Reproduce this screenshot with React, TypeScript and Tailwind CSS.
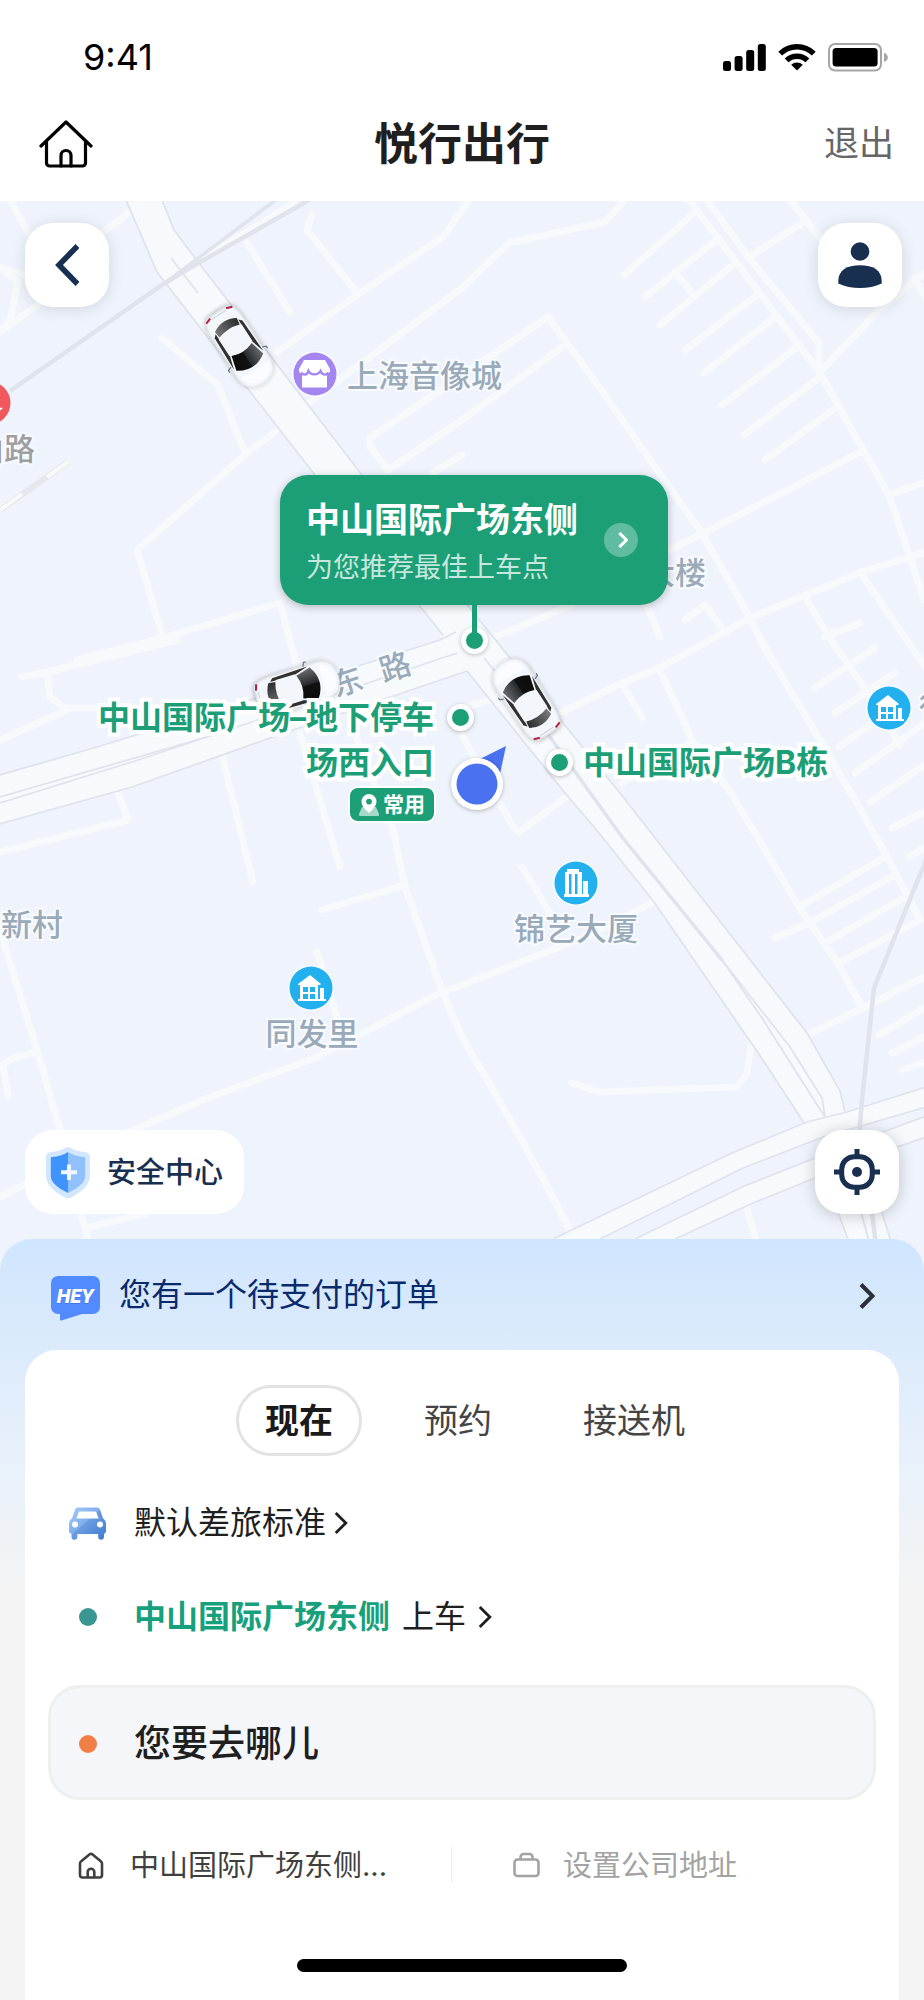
import { useState } from 'react'
import type { SVGProps } from 'react'

type IconProps = SVGProps<SVGSVGElement>

function IconSignal(p: IconProps) {
  return (
    <svg viewBox="0 0 43 27" fill="currentColor" aria-hidden {...p}>
      <rect x="0" y="17" width="8" height="10" rx="2.5" />
      <rect x="11.6" y="12" width="8" height="15" rx="2.5" />
      <rect x="23.2" y="6" width="8" height="21" rx="2.5" />
      <rect x="34.8" y="0" width="8" height="27" rx="2.5" />
    </svg>
  )
}

function IconWifi(p: IconProps) {
  return (
    <svg viewBox="0 0 38 28" fill="none" stroke="currentColor" strokeWidth={5.4} aria-hidden {...p}>
      <path d="M2.2 10.6a24 24 0 0133.6 0" />
      <path d="M8.6 17.4a15 15 0 0120.8 0" />
      <path d="M13.2 21.8a8.4 8.4 0 0111.6 0L19 27.6z" fill="currentColor" stroke="none" />
    </svg>
  )
}

function IconBattery(p: IconProps) {
  return (
    <svg viewBox="0 0 60 29" fill="none" aria-hidden {...p}>
      <rect x="1" y="1" width="52" height="26.500" rx="6" stroke="#a6a6a6" strokeWidth={2} />
      <rect x="4.600" y="5" width="45" height="18.500" rx="3.500" fill="#000" />
      <path d="M56 9.800c2.400 1 3.800 2.700 3.800 4.600s-1.400 3.700-3.800 4.600z" fill="#a6a6a6" />
    </svg>
  )
}

function IconHome(p: IconProps) {
  return (
    <svg viewBox="0 0 54 48" fill="none" stroke="currentColor" strokeWidth={3.2} strokeLinecap="round" strokeLinejoin="round" aria-hidden {...p}>
      <path d="M2 26L27 2l25 24" />
      <path d="M7.500 21.500V43a3 3 0 003 3h33a3 3 0 003-3V21.500" />
      <path d="M22 46V35.500a5 5 0 0110 0V46" />
    </svg>
  )
}

function IconBack(p: IconProps) {
  return (
    <svg viewBox="0 0 24 42" fill="none" stroke="currentColor" strokeWidth={5.6} aria-hidden {...p}>
      <path d="M22.500 2L4 21l18.500 19" />
    </svg>
  )
}

function IconUser(p: IconProps) {
  return (
    <svg viewBox="0 0 44 47" fill="currentColor" aria-hidden {...p}>
      <circle cx="22" cy="9.500" r="9.300" />
      <path d="M.3 41.500V39C.3 28 9 23.200 22 23.200S43.700 28 43.700 39v2.500C37 44.800 30 46 22 46S7 44.800.3 41.500z" />
    </svg>
  )
}

function IconTarget(p: IconProps) {
  return (
    <svg viewBox="0 0 46 46" fill="none" stroke="currentColor" strokeWidth={5} aria-hidden {...p}>
      <rect x="7.700" y="7.700" width="30.600" height="30.600" rx="12.500" />
      <path d="M23 0v7M23 39v7M0 23h7M39 23h7" />
      <circle cx="23" cy="23" r="5" fill="currentColor" stroke="none" />
    </svg>
  )
}

function IconShield(p: IconProps) {
  return (
    <svg viewBox="0 0 44 51" fill="none" aria-hidden {...p}>
      <path d="M22 0c2 0 5.500 3 10.500 4 3 .6 6 .8 8 1.500C43 6.400 44 7.800 44 10v19c0 8.500-8 15.500-18.500 21.200-2.500 1.200-4.500 1.200-7 0C8 44.500 0 37.500 0 29V10c0-2.200 1-3.600 3.500-4.500 2-.7 5-.9 8-1.500C16.500 3 20 0 22 0z" fill="#d3e6ff" />
      <path d="M22 5c-4.500 2.800-10 4.600-16 5-.8 0-1.200.4-1.200 1.200V29C4.800 35.500 12 41 22 46z" fill="#3e94fb" />
      <path d="M22 5c4.500 2.800 10 4.600 16 5 .8 0 1.200.4 1.200 1.200V29C39.200 35.500 32 41 22 46z" fill="#91c0ff" />
      <path d="M23 17.500V33M15 25.200h16" stroke="#f4f6ff" strokeWidth={4} />
    </svg>
  )
}

function IconHey(p: IconProps) {
  return (
    <svg viewBox="0 0 49 45" aria-hidden {...p}>
      <path d="M7 0h35a7 7 0 017 7v24a7 7 0 01-7 7H31L10.500 44.500c-1 .3-1.500-.2-1.500-1V38H7a7 7 0 01-7-7V7a7 7 0 017-7z" fill="#528bff" />
      <g fontSize="20" fontWeight={900} fontStyle="italic" fontFamily="Roboto, sans-serif" textAnchor="middle">
        <text x="24" y="28" fill="#2f63d8" opacity={0.5}>HEY</text>
        <text x="24" y="27" fill="#fff">HEY</text>
      </g>
    </svg>
  )
}

function IconCarFront(p: IconProps) {
  return (
    <svg viewBox="0 0 37 33" aria-hidden {...p}>
      <defs>
        <linearGradient id="car-front" x1="0" y1="0" x2="1" y2="1">
          <stop offset="0" stopColor="#a9ccf7" />
          <stop offset=".45" stopColor="#7fadec" />
          <stop offset=".46" stopColor="#6b9de0" />
          <stop offset="1" stopColor="#3d7ad0" />
        </linearGradient>
      </defs>
      <path fillRule="evenodd" d="M9 .5h19c1.500 0 2.600.8 3.100 2.200l3 8.800c1.900 1.200 2.900 3 2.900 5.500v7c0 1.500-.7 2.500-2 2.700v3.100a2.900 2.900 0 01-5.800 0V27H8.300v2.800a2.900 2.900 0 01-5.800 0v-3C.8 26.500 0 25.500 0 24v-7c0-2.500 1.100-4.300 3-5.500l3-8.800C6.500 1.300 7.500.5 9 .5zm1 4L7.300 11.400h22.400L27.300 5.200c-.2-.5-.6-.7-1-.7zM6 14.500a3 3 0 100 6 3 3 0 000-6zm25 0a3 3 0 100 6 3 3 0 000-6z" fill="url(#car-front)" />
    </svg>
  )
}

function IconHomeSmall(p: IconProps) {
  return (
    <svg viewBox="0 0 26 27" fill="none" stroke="currentColor" strokeWidth={2.600} strokeLinejoin="round" aria-hidden {...p}>
      <path d="M2 11.500c0-1 .4-1.700 1.200-2.300L11.400 2.400c1-.8 2.200-.8 3.200 0l8.200 6.800c.8.600 1.200 1.300 1.200 2.300V23a2.500 2.500 0 01-2.500 2.500h-17A2.500 2.500 0 012 23z" />
      <path d="M9.700 25.500V20a3.300 3.300 0 016.600 0v5.500" />
    </svg>
  )
}

function IconBag(p: IconProps) {
  return (
    <svg viewBox="0 0 27 26" fill="none" stroke="currentColor" strokeWidth={2.600} aria-hidden {...p}>
      <rect x="1.500" y="7.500" width="24" height="16.500" rx="3" />
      <path d="M7.500 7.500V5a3 3 0 013-3h6a3 3 0 013 3v2.500" />
    </svg>
  )
}

function IconChevron(p: IconProps) {
  return (
    <svg viewBox="0 0 16 26" fill="none" stroke="currentColor" strokeWidth={3.200} aria-hidden {...p}>
      <path d="M2 1.500L13.500 13 2 24.500" />
    </svg>
  )
}

function IconPlace(p: IconProps) {
  return (
    <svg viewBox="0 0 20 22" fill="none" aria-hidden {...p}>
      <path d="M3 13h14l3 7a1.500 1.500 0 01-1.500 2h-17A1.500 1.500 0 010 20z" fill="#a5d9c8" />
      <path fillRule="evenodd" d="M10 0a7.500 7.500 0 017.500 7.500C17.500 12 14 15 10 19 6 15 2.500 12 2.500 7.500A7.500 7.500 0 0110 0zm0 4.700a2.900 2.900 0 100 5.800 2.900 2.900 0 000-5.800z" fill="#fff" />
    </svg>
  )
}

const minorRoads = [
  '10,200 28,233', '98,236 130,212', '0,267 18,282 10,322 0,330', '0,268 30,276', '0,332 40,303',
  '247,243 290,312', '312,215 307,230 357,293', '277,352 357,295 443,237 470,199',
  '162,338 218,385 245,453', '275,432 248,452 137,550 163,638', '77,660 163,638 280,603 297,667',
  '310,402 462,288 509,243 605,222 625,200', '388,470 370,447 370,438 548,317 600,388 662,477 702,533 750,618 772,660',
  '388,470 462,420 565,345', '433,473 462,455',
  '689,200 820,373 839,407 865,453 889,495 910,557 924,600', '707,200 749,258 819,343 819,370',
  '692,215 624,275', '719,238 645,297', '675,272 692,293', '735,263 660,325', '757,295 685,350',
  '775,317 704,373', '797,347 722,405', '820,377 744,435', '837,407 765,460', '860,452 782,493 670,550',
  '790,200 820,238', '749,257 804,222', '820,372 879,310 926,272', '914,278 926,297', '889,495 926,482',
  '926,552 862,572 750,618 659,668 622,683 562,712', '860,572 926,668', '807,600 829,637 864,687 900,745',
  '824,637 860,623', '705,605 685,620', '705,605 725,633', '495,637 572,605', '647,607 660,637',
  '875,648 815,688', '895,673 835,713', '905,700 839,747', '926,722 855,773', '926,764 870,802',
  '926,811 892,828', '926,847 909,857', '622,683 642,718', '622,783 692,742',
  '659,668 692,740 729,790 799,907 839,965 862,1007', '799,907 885,857', '775,938 809,923 895,875',
  '825,943 905,897', '839,963 920,920', '760,640 828,753 885,853 920,920', '807,1035 865,1007 926,976',
  '879,1035 926,1007', '892,1053 926,1036', '902,1070 926,1062',
  '572,1083 599,1092 737,1087 747,1073 752,1040', '522,867 550,913', '203,1100 317,1057 440,993 462,985 585,937 652,903',
  '405,887 443,993 462,1037 499,1100 540,1173 572,1234', '462,708 490,700', '462,735 512,825 519,832 565,798',
  '747,1208 756,1242', '22,677 47,672 177,640', '47,672 50,697 67,710 0,740', '67,708 100,708',
  '117,790 128,820 0,852', '222,755 253,882', '300,733 340,867', '357,740 393,830 405,887', '322,910 405,885',
  '317,952 337,1017', '203,1100 127,1133 0,1197', '90,1227 147,1213', '0,930 37,1050 60,1130 88,1240',
  '37,1052 13,1058 3,1065 8,1095',
]

// Filled bands of the avenues, drawn over the side streets
const avenues = [
  '0,775 97,747 260,697 440,640 480,624 500,664 462,672 287,732 132,787 0,824',
  '126,200 157,272 315,475 443,635 467,671 565,793 595,828 654,902 763,1060 804,1123 845,1112 840,1091 807,1033 620,793 510,658 362,475 202,267 174,230 162,200',
  '553,1239 732,1153 807,1122 847,1112 926,1087 926,1108 823,1137 743,1168 600,1239',
  '635,1239 742,1187 815,1158 883,1132 926,1116 926,1137 897,1147 815,1178 753,1203 675,1239',
  '826,1180 848,1245 892,1245 872,1180',
]

const avenueEdges = [
  '126,200 157,272 315,475 443,635', '162,200 174,230 202,267 362,475 510,658 620,793 807,1033 840,1091 845,1112',
  '467,671 565,793 595,828 654,902 763,1060 804,1123', '171,258 198,293',
  '0,775 97,747 260,697 440,640 456,632', '0,824 132,787 287,732 467,671', '0,797 207,737 300,706 457,653',
  '0,803 132,762 207,737', '484,658 550,737 622,837 722,960 762,1018 814,1100 825,1117',
  '722,960 790,1047 822,1098 825,1117',
  '553,1239 732,1153 807,1122 847,1112 926,1087', '600,1239 743,1168 823,1137 926,1107',
  '635,1239 742,1187 815,1158 883,1132 926,1116', '675,1239 753,1203 815,1178 897,1147 926,1137',
  '826,1180 850,1245', '872,1180 892,1245', '855,1190 870,1245',
]

const cars = [
  { x: 240, y: 347, heading: 147 },
  { x: 526, y: 699, heading: -33 },
  { x: 297, y: 688, heading: 73 },
]

function Car({ x, y, heading }: { x: number; y: number; heading: number }) {
  return (
    <g transform={`translate(${x} ${y}) rotate(${heading})`}>
      <path d="M0-43C10-43 18-38 19-27L18.500 24C18 34 16 39 12 40.500Q0 42-12 40.500C-16 39-18 34-18.500 24L-19-27C-18-38-10-43 0-43z" fill="#f3f7fb" stroke="#dfe4e8" strokeWidth={1} filter="url(#car-shadow)" />
      <path d="M0-40C9-40 14-36 16-27H-16C-14-36-9-40 0-40z" fill="#fafcff" />
      <path d="M-16-18Q0-29 16-18L12-3Q0-8-12-3z" fill="url(#windshield)" />
      <path d="M-12 19Q0 23 12 19L13 26Q0 34-13 26z" fill="url(#rear-window)" />
      <path d="M-17.500-16L-13-1-13.500 24-16.500 21z" fill="#303030" />
      <path d="M17.500-16L13-1 13.500 24 16.500 21z" fill="#303030" />
      <path d="M-13-2V18M13-2V18" stroke="#f3f7fb" strokeWidth={1.500} />
      <path d="M-18.500-12l-4-1.500v-2.500M18.500-12l4-1.500v-2.500" stroke="#6b7480" strokeWidth={1.200} fill="none" />
      <path d="M-15.500 38l6 2M15.500 38l-6 2" stroke="#b8213e" strokeWidth={2} />
      <path d="M-8 38.500H8" stroke="#c4ced6" strokeWidth={1} />
    </g>
  )
}

function HousePoi({ x, y }: { x: number; y: number }) {
  return (
    <g transform={`translate(${x} ${y})`}>
      <circle r="23" fill="#f8fbff" />
      <circle r="21.500" fill="#22b0ee" />
      <path fillRule="evenodd" d="M-13-4L-1-13 10-4 9-3H7V11H9V0h4v11h2v2H-13v-2h2V-3h-2zM-8-1v5h5v-5zm7 0v5h5v-5zm-7 7v5h5V6zm7 0v5h5V6z" fill="#fff" />
    </g>
  )
}

function MapCanvas() {
  return (
    <svg viewBox="0 201 924 1070" className="block h-full w-full" aria-hidden>
      <defs>
        <linearGradient id="windshield" x1="0" y1="0" x2="1" y2="0">
          <stop offset="0" stopColor="#6b6e70" />
          <stop offset=".5" stopColor="#26282a" />
          <stop offset=".52" stopColor="#111" />
          <stop offset="1" stopColor="#0c0c0c" />
        </linearGradient>
        <linearGradient id="rear-window" x1="0" y1="0" x2="1" y2="0">
          <stop offset="0" stopColor="#2b2b2b" />
          <stop offset="1" stopColor="#77797a" />
        </linearGradient>
        <filter id="car-shadow" x="-40%" y="-40%" width="180%" height="180%">
          <feDropShadow dx="0" dy="1" stdDeviation="2.500" floodColor="#000" floodOpacity=".35" />
        </filter>
      </defs>

      <g fill="none" stroke="#f6fafd" strokeWidth={7} strokeLinecap="round" strokeLinejoin="round">
        {minorRoads.map((points) => (
          <polyline key={points} points={points} />
        ))}
      </g>
      <polyline points="175,276 296,201" fill="none" stroke="#f6fafd" strokeWidth={6} />
      <g fill="#f6fafd">
        {avenues.map((points) => (
          <polygon key={points} points={points} />
        ))}
      </g>
      <g fill="none" stroke="#dfe3ec" strokeWidth={1.800}>
        {avenueEdges.map((points) => (
          <polyline key={points} points={points} />
        ))}
      </g>
      <g fill="none" stroke="#dfe3eb">
        <polyline points="10,391 165,283 200,262 311,199" strokeWidth={4.500} />
        <polyline points="165,283 277,199" strokeWidth={3.500} />
        <polyline points="926,860 874,988 862,1100 858,1150 872,1213 876,1245" strokeWidth={4.500} />
        <polyline points="550,737 622,837 722,960" strokeWidth={3.500} />
      </g>
      <path d="M0 510L68 462" stroke="#e4e8ec" strokeWidth={6} />
      <path d="M0 510L22 494M47 477L68 462" stroke="#f6faf9" strokeWidth={4} />

      <g fontSize="31" fontWeight={500} fill="#9aaab8" stroke="#f8fbff" strokeWidth={4} strokeLinejoin="round" paintOrder="stroke">
        <text x="347" y="387">上海音像城</text>
        <text x="706" y="584" textAnchor="end">大楼</text>
        <text x="35" y="460" textAnchor="end" fill="#9d9fa1">山路</text>
        <text x="1" y="936">新村</text>
        <text x="576" y="940" textAnchor="middle">锦艺大厦</text>
        <text x="312" y="1045" textAnchor="middle">同发里</text>
        <text x="919" y="718">徐</text>
        <text transform="translate(347 682) rotate(-18)" y="11" textAnchor="middle">东</text>
        <text transform="translate(395 667) rotate(-18)" y="11" textAnchor="middle">路</text>
      </g>

      <circle cx="315" cy="374" r="23" fill="#f8fbff" />
      <circle cx="315" cy="374" r="21.500" fill="#a586f0" />
      <path d="M304 360h21l5 9c.5 2-.5 4.500-3 5.500v13h-25v-13c-2.500-1-3.500-3.500-3-5.500z" fill="#fff" />
      <path d="M301 372.500c2 3 6 3 7.500-1.500 2 4.500 9.500 4.500 12 0 2 4.500 6 4.500 8 1.500" fill="none" stroke="#a586f0" strokeWidth={2.400} />
      <circle cx="-11" cy="403" r="21.500" fill="#f0585d" />
      <path d="M-2 407l5 1-5 4z" fill="#fff" />
      <HousePoi x={311} y={988} />
      <HousePoi x={889} y={708} />
      <circle cx="576" cy="883" r="23" fill="#f8fbff" />
      <circle cx="576" cy="883" r="21.500" fill="#22b0ee" />
      <path fillRule="evenodd" d="M567 869h12v3h3v22h1v-13h5v13h1v3h-25v-3h1v-22h2zm2 5v20h2.500v-20zm6 0v20h2.500v-20z" fill="#fff" />

      {cars.map((car) => (
        <Car key={`${car.x}-${car.y}`} {...car} />
      ))}

      <path d="M506 746l-26 13 20 15z" fill="#4a72f0" />
      <circle cx="477" cy="784" r="26" fill="#fff" style={{ filter: 'drop-shadow(0 1px 2px rgba(0,0,0,.25))' }} />
      <circle cx="477" cy="784" r="20.500" fill="#4a72f0" />
    </svg>
  )
}

function PickupDot() {
  return <span className="block size-[27px] shrink-0 rounded-full border-[5px] border-white bg-[#1c9f77] shadow-[0_1px_4px_rgba(0,0,0,0.25)]" />
}

const outlined = 'text-[32px] leading-[45px] font-bold text-[#1c9f77] [paint-order:stroke_fill] [-webkit-text-stroke:8px_white]'

const floating = 'absolute flex h-[84px] items-center justify-center rounded-[28px] bg-white text-[#182f50]'

const tabs = ['现在', '预约', '接送机']

export default function App() {
  const [tab, setTab] = useState('现在')

  return (
    <div className="flex min-h-screen flex-col bg-[#f4f4f4] font-['Inter','Noto_Sans_CJK_SC',sans-serif] text-[#1f1f1f]">
      <header className="bg-white">
        <div className="flex h-[86px] items-center justify-between pt-7 pr-9 pl-[83px]">
          <span className="text-[36px] leading-none text-black">9:41</span>
          <div className="flex items-center gap-3 text-black">
            <IconSignal className="h-[27px] w-[43px]" />
            <IconWifi className="h-7 w-[38px]" />
            <IconBattery className="h-[29px] w-[60px]" />
          </div>
        </div>
        <div className="grid h-[115px] grid-cols-3 items-center px-[30px]">
          <button type="button" aria-label="首页" className="ml-[9px] justify-self-start text-black">
            <IconHome className="h-12 w-[54px]" />
          </button>
          <h1 className="text-center text-[44px] leading-none font-bold">悦行出行</h1>
          <button type="button" className="justify-self-end text-[35px] leading-none text-[#666]">退出</button>
        </div>
      </header>

      <section className="relative h-[1070px] overflow-hidden bg-[#eff3fb]">
        <div className="absolute top-0 left-1/2 h-[1070px] w-[924px] -translate-x-1/2">
          <MapCanvas />

          <p className={`absolute top-[494px] right-[490px] w-[340px] text-right ${outlined}`}>
            中山国际广场–地下停车场西入口
          </p>
          <span className="absolute top-[587px] left-[350px] flex h-[33px] w-[84px] items-center justify-center gap-1 rounded-lg bg-[#1c9f77] text-[21px] leading-none font-bold text-white ring-2 ring-white">
            <IconPlace className="h-[22px] w-5" />
            常用
          </span>
          <span className="absolute top-[503px] left-[447px]"><PickupDot /></span>

          <div className="absolute top-[539px] left-[546px] flex items-center gap-[10px]">
            <PickupDot />
            <p className={`whitespace-nowrap ${outlined}`}>中山国际广场B栋</p>
          </div>

          <div className="absolute top-[274px] left-[280px] flex w-[388px] flex-col items-center">
            <button
              type="button"
              className="z-10 flex h-[130px] w-full items-center justify-between rounded-[28px] bg-[#1c9f77] pr-[30px] pl-[26px] text-left text-white shadow-[0_2px_8px_rgba(0,0,0,0.25)]"
            >
              <span className="flex flex-col gap-2 pt-2">
                <span className="text-[34px] leading-10 font-bold">中山国际广场东侧</span>
                <span className="text-[27px] leading-10 text-white/75">为您推荐最佳上车点</span>
              </span>
              <span className="flex size-[34px] items-center justify-center rounded-full bg-white/30">
                <IconChevron className="ml-1 h-4 w-[10px]" strokeWidth={5} />
              </span>
            </button>
            <span className="z-10 -mb-[18px] h-10 w-[5px] bg-[#1c9f77]" />
            <PickupDot />
          </div>
        </div>

        <button type="button" aria-label="返回" className={`top-[22px] left-[25px] w-[84px] shadow-[0_2px_16px_rgba(0,0,0,0.12)] ${floating}`}>
          <IconBack className="h-[42px] w-6" />
        </button>
        <button type="button" aria-label="个人中心" className={`top-[22px] right-[22px] w-[84px] shadow-[0_2px_16px_rgba(0,0,0,0.12)] ${floating}`}>
          <IconUser className="h-[47px] w-11" />
        </button>
        <button type="button" className={`bottom-[57px] left-[25px] gap-[17px] px-[21px] text-[29px] leading-none font-medium ${floating}`}>
          <IconShield className="h-[51px] w-11" />
          安全中心
        </button>
        <button type="button" aria-label="定位" className={`right-[25px] bottom-[57px] w-[84px] shadow-[0_2px_16px_rgba(0,0,0,0.2)] ${floating}`}>
          <IconTarget className="size-[46px]" />
        </button>
      </section>

      <main className="relative -mt-8 flex grow flex-col rounded-t-[32px] bg-[linear-gradient(180deg,#d0e5ff_0px,#dcebfb_110px,#e8f1fb_220px,#f4f4f4_350px)]">
        <a href="#order" className="flex h-[111px] items-center pr-[49px] pl-[51px] text-[32px] leading-none text-[#0a2a6c]">
          <IconHey className="mt-2 mr-[19px] h-[45px] w-[49px]" />
          <span className="grow">您有一个待支付的订单</span>
          <IconChevron className="mt-0.5 h-[26px] w-4 text-[#2b2f36]" strokeWidth={4} />
        </a>

        <div className="mx-[25px] flex grow flex-col rounded-t-[32px] bg-white px-[23px] pt-[35px]">
          <nav className="flex justify-center gap-[33px] pl-[26px]">
            {tabs.map((name) => (
              <button
                key={name}
                type="button"
                aria-pressed={name === tab}
                onClick={() => setTab(name)}
                className={`h-[71px] rounded-full border-[3px] px-[26px] text-[34px] leading-none ${
                  name === tab ? 'border-[#e3e3e3] font-bold text-[#1a1a1a]' : 'border-transparent text-[#444]'
                }`}
              >
                {name}
              </button>
            ))}
          </nav>

          <a href="#standard" className="mt-5 flex h-[94px] items-center pl-[21px] text-[32px] leading-none">
            <IconCarFront className="mr-7 h-[33px] w-[37px]" />
            默认差旅标准
            <IconChevron className="ml-2 h-6 w-[14px]" />
          </a>
          <a href="#pickup" className="flex h-[94px] items-center pl-[31px] text-[32px] leading-none">
            <span className="mr-[37px] size-[18px] rounded-full bg-[#3a9690]" />
            <span className="font-bold text-[#16a07c]">中山国际广场东侧</span>
            <span className="ml-3">上车</span>
            <IconChevron className="ml-3 h-6 w-[14px]" />
          </a>

          <label className="mt-[21px] flex h-[115px] items-center rounded-[32px] border-[3px] border-[#eeefef] bg-[#f4f6fa] pt-0.5 pl-7">
            <span className="mr-[37px] size-[18px] shrink-0 rounded-full bg-[#f07f47]" />
            <input
              type="text"
              aria-label="目的地"
              placeholder="您要去哪儿"
              className="min-w-0 grow bg-transparent text-[37px] leading-[56px] font-medium outline-none placeholder:text-[#1f1f1f]"
            />
          </label>

          <div className="mt-[47px] flex h-9 items-center text-[29px] leading-none">
            <a href="#home" className="flex w-[403px] items-center pl-[30px] text-[#3f3f3f]">
              <IconHomeSmall className="mr-[26px] h-[27px] w-[26px]" />
              中山国际广场东侧...
            </a>
            <span className="h-9 w-px bg-[#ececec]" />
            <a href="#company" className="flex items-center pl-[61px] text-[#a3a3a3]">
              <IconBag className="mr-[23px] h-[26px] w-[27px]" />
              设置公司地址
            </a>
          </div>

          <div className="mx-auto mt-auto mb-7 h-[13px] w-[330px] rounded-full bg-black" />
        </div>
      </main>
    </div>
  )
}
